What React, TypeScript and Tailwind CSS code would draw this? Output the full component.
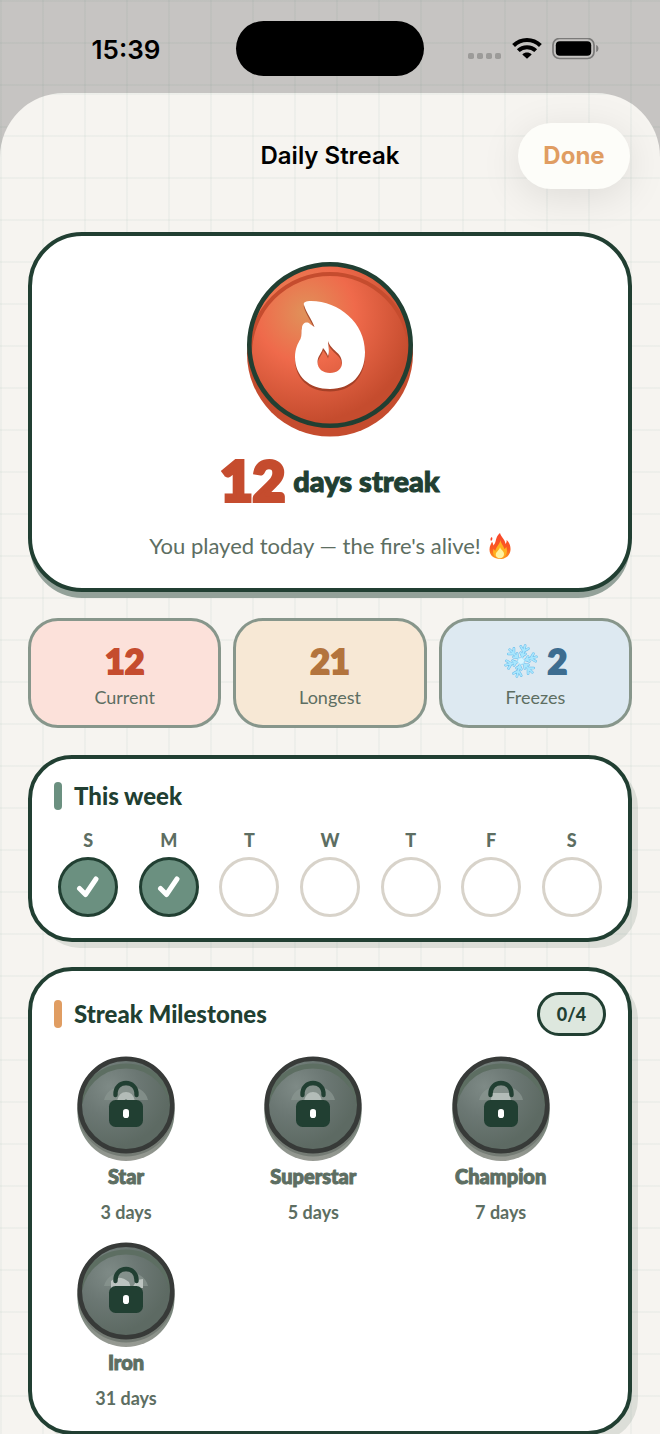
import React from 'react';

const stats = [
  { label: 'Current', value: '12', card: 'bg-[#fce1da]', text: 'text-[#c54c2e]' },
  { label: 'Longest', value: '21', card: 'bg-[#f7e8d5]', text: 'text-[#b3743d]' },
  { label: 'Freezes', value: '2', card: 'bg-[#dde9f1]', text: 'text-[#3d6d90]', frozen: true },
];

const week = [
  { day: 'S', done: true },
  { day: 'M', done: true },
  { day: 'T', done: false },
  { day: 'W', done: false },
  { day: 'T', done: false },
  { day: 'F', done: false },
  { day: 'S', done: false },
];

const milestones = [
  { name: 'Star', days: 3 },
  { name: 'Superstar', days: 5 },
  { name: 'Champion', days: 7 },
  { name: 'Iron', days: 31 },
];

const GRID =
  'bg-[linear-gradient(to_right,rgba(40,110,80,0.04)_2px,transparent_2px),linear-gradient(to_bottom,rgba(40,110,80,0.04)_2px,transparent_2px)] bg-[size:42px_42px]';

const DISPLAY = "font-['Lato',sans-serif] font-black";

const StatusBar: React.FC = () => (
  <div className={`relative flex h-[157px] items-start justify-between bg-[#c6c4c2] px-[60px] pt-[21px] ${GRID}`}>
    <div className="flex h-14 w-[132px] items-center justify-center text-[26px] font-semibold text-black">15:39</div>
    <div className="h-[55px] w-[188px] rounded-full bg-black" />
    <div className="flex h-14 w-[132px] items-center gap-[10px]">
      <svg viewBox="0 0 34 8" className="mt-[15px] h-2 w-[34px] shrink-0" fill="#9c9b99">
        <rect x="0" y="0" width="6" height="6" rx="1.8" />
        <rect x="9" y="0" width="6" height="6" rx="1.8" />
        <rect x="18" y="0" width="6" height="6" rx="1.8" />
        <rect x="27" y="0" width="6" height="6" rx="1.8" />
      </svg>
      <svg viewBox="0 0 30 22" className="h-[22px] w-[30px] shrink-0" fill="none" stroke="#000" strokeWidth="4">
        <path d="M1.6 7.500 C9 0.2 21 0.2 28.4 7.500" />
        <path d="M6.3 12.600 C11 8 19 8 23.7 12.600" />
        <path d="M15 20.800 L10.300 16.400 C13 14 17 14 19.700 16.400 Z" fill="#000" stroke="none" />
      </svg>
      <svg viewBox="0 0 48 22" className="h-[22px] w-12 shrink-0">
        <rect x="1" y="0.500" width="41" height="20" rx="6.5" fill="none" stroke="#7b7a79" strokeWidth="1.7" />
        <rect x="3.8" y="3.300" width="35.4" height="14.4" rx="4" fill="#000" />
        <path d="M44.2 7 C47.2 8 47.2 13 44.2 14 Z" fill="#7b7a79" />
      </svg>
    </div>
  </div>
);

const FireCoin: React.FC = () => (
  <svg viewBox="0 0 168 176" className="h-44 w-[168px]">
    <defs>
      <radialGradient id="ember" cx="0.35" cy="0.3" r="0.68">
        <stop offset="0" stopColor="#e0925a" />
        <stop offset="0.45" stopColor="#ef6a4b" />
        <stop offset="1" stopColor="#c54c2e" />
      </radialGradient>
      <clipPath id="emberFace">
        <circle cx="84" cy="84" r="79" />
      </clipPath>
    </defs>
    <circle cx="84" cy="92.5" r="83" fill="#c54c2e" />
    <circle cx="84" cy="84" r="80.5" fill="url(#ember)" />
    <circle cx="84" cy="93" r="80" fill="none" stroke="#c54c2e" strokeWidth="4" clipPath="url(#emberFace)" />
    <circle cx="84" cy="84" r="80.7" fill="none" stroke="#213f32" strokeWidth="4.6" />
    <g transform="translate(0 1)">
      <path
        d="M58 43 C57 40 60 39 65 39 C93 39 119 61 119 90 C119 113 105 127 84 127 C63 127 49 114 49 95 C49 87 52 81 54.500 77 C56 73 55 70 56 66 C56 61 61 59 64 62 L68.500 65 C66 58 60 50 58 43 Z M82 79 C85 89 96 90 96 101 C96 107 91 111 84 111 C77 111 71.500 107 71.500 100 C71.500 94 76 91 77 86 C79 88 81 91 82 94 C84 89 82 84 82 79 Z"
        fill="#943820"
        fillRule="evenodd"
        transform="translate(0 2.5)"
        opacity="0.75"
      />
      <path
        d="M58 43 C57 40 60 39 65 39 C93 39 119 61 119 90 C119 113 105 127 84 127 C63 127 49 114 49 95 C49 87 52 81 54.500 77 C56 73 55 70 56 66 C56 61 61 59 64 62 L68.500 65 C66 58 60 50 58 43 Z M82 79 C85 89 96 90 96 101 C96 107 91 111 84 111 C77 111 71.500 107 71.500 100 C71.500 94 76 91 77 86 C79 88 81 91 82 94 C84 89 82 84 82 79 Z"
        fill="#fff"
        fillRule="evenodd"
      />
    </g>
  </svg>
);

const FireEmoji: React.FC = () => (
  <svg viewBox="0 0 22 26" className="h-[26px] w-[22px]" aria-hidden="true">
    <defs>
      <linearGradient id="fireOuter" x1="0" y1="0" x2="0" y2="1">
        <stop offset="0" stopColor="#f8452c" />
        <stop offset="0.6" stopColor="#fb5a22" />
        <stop offset="1" stopColor="#ff9a1e" />
      </linearGradient>
    </defs>
    <path
      d="M11 0 C12 4 16 6 16.500 11 C17.500 10 17.800 8.500 17.600 7 C20 9 21.800 12.500 21.500 17 C21 22.500 16.500 26 11 26 C5 26 0.500 22.500 0.500 16.500 C0.500 13 2.300 10.500 3 8.800 C4 10 4.200 11.500 4.300 12.500 C7 9.500 6.500 7.500 7.500 5 C8.200 3 9.500 1 11 0 Z"
      fill="url(#fireOuter)"
    />
    <path d="M2 8 C1 6.500 1.400 5 2.800 4 C4 5.500 3.200 7 2 8 Z" fill="#f8452c" />
    <path d="M11.500 7 C12 11 15 13 15.300 16 C16.500 15.500 17 14.500 17.200 13.800 C19 18 18 25 11 25 C4.500 25 3 20 4.600 15.800 C5 17 5.500 17.500 6.500 17.800 C6.800 14 10.500 12 11.500 7 Z" fill="#ffb01f" />
    <path d="M11 14 C11.500 17 15.500 18 15 21.500 C14.700 24 13 25.300 11 25.300 C8.500 25.300 6.500 23.700 6.800 21.300 C7 18.500 10.500 17.500 11 14 Z" fill="#fff2a0" />
  </svg>
);

const SnowflakeEmoji: React.FC = () => (
  <svg viewBox="-18 -18 36 36" className="size-9" fill="none" strokeLinecap="round" aria-hidden="true">
    {[15, 75, 135, 195, 255, 315].map((angle) => (
      <g key={angle} transform={`rotate(${angle})`}>
        <path d="M0 0 V-16 M0 -5 L-2.500 -8 M0 -5 L2.500 -8 M0 -10 L-4 -14 M0 -10 L4 -14" stroke="#62b9ea" strokeWidth="2.6" />
        <path d="M0 0 V-16 M0 -5 L-2.500 -8 M0 -5 L2.500 -8 M0 -10 L-4 -14 M0 -10 L4 -14" stroke="#a9e6fd" strokeWidth="1.7" />
      </g>
    ))}
    <circle r="3" fill="#d6f5ff" />
  </svg>
);

const LockedCoin: React.FC<{ name: string }> = ({ name }) => (
  <svg viewBox="0 0 98 106" className="h-[106px] w-[98px]">
    <defs>
      <radialGradient id={`stone-${name}`} cx="0.32" cy="0.3" r="0.66">
        <stop offset="0" stopColor="#7e8a86" />
        <stop offset="0.5" stopColor="#6b7773" />
        <stop offset="1" stopColor="#5d6a63" />
      </radialGradient>
      <linearGradient id={`rim-${name}`} x1="0" y1="0" x2="0" y2="1">
        <stop offset="0.5" stopColor="#6d7d72" />
        <stop offset="1" stopColor="#989b94" />
      </linearGradient>
      <clipPath id={`face-${name}`}>
        <circle cx="49" cy="49" r="45" />
      </clipPath>
    </defs>
    <circle cx="49" cy="56.500" r="48.500" fill={`url(#rim-${name})`} />
    <circle cx="49" cy="52" r="48.500" fill="#747b74" />
    <circle cx="49" cy="49" r="46" fill={`url(#stone-${name})`} />
    <circle cx="49" cy="57" r="47" fill="none" stroke="#5d6e62" strokeWidth="5" clipPath={`url(#face-${name})`} />
    <circle cx="49" cy="49" r="46.300" fill="none" stroke="#373a38" strokeWidth="4.600" />
    <path d="M27 44 C31 25 67 25 71 44 Z" fill="#8a9590" opacity="0.75" />
    {name === 'Iron' ? (
      <path d="M34 46 V39 Q42 32 52 40 L54 46 Z M55 46 L60 38 L66 37 V46 Z" fill="#bcc4c0" />
    ) : name === 'Champion' ? (
      <path d="M40 37 H57 L59 44 H39 Z" fill="#b3bcb8" />
    ) : (
      <path d="M40 45 Q42 36 49 36 Q56 36 58 45 Z" fill="#b3bcb8" />
    )}
    <path d="M38.500 39 C37.500 23 60.500 23 59.500 39" fill="none" stroke="#213f32" strokeWidth="4.400" strokeLinecap="round" />
    {name === 'Star' && <path d="M46.500 45 Q49 42 51.500 45 Z" fill="#213f32" />}
    <rect x="32" y="44" width="34" height="27" rx="6.500" fill="#213f32" />
    <rect x="46" y="53" width="6" height="9" rx="2.800" fill="#fff" />
  </svg>
);

const SectionTitle: React.FC<{ bar: string; children: React.ReactNode }> = ({ bar, children }) => (
  <h2 className={`flex items-center gap-3 text-2xl leading-7 text-[#213f32] ${DISPLAY}`}>
    <span className={`h-7 w-2 rounded-full ${bar}`} />
    {children}
  </h2>
);

const App: React.FC = () => (
  <div className="min-h-screen overflow-hidden bg-[#c6c4c2] font-['Inter',sans-serif]">
    <StatusBar />
    <main className={`relative -mt-16 rounded-t-[64px] bg-[#f6f4f0] px-7 ${GRID}`}>
      <header className="grid grid-cols-3 items-center pt-[30px]">
        <h1 className="col-start-2 text-center text-2xl font-semibold whitespace-nowrap text-black">Daily Streak</h1>
        <button
          type="button"
          className="mr-[2px] h-[66px] w-28 justify-self-end rounded-full bg-[#fdfdf9] text-2xl font-bold text-[#e09d62] shadow-[0_8px_40px_rgba(0,0,0,0.1)]"
        >
          Done
        </button>
      </header>

      <section className="mt-[43px] flex flex-col items-center rounded-[54px] border-4 border-[#213f32] bg-white pt-[25px] pb-7 shadow-[0_8px_0_-2px_#93a199]">
        <FireCoin />
        <div className="mt-2 flex h-[70px] items-center gap-2">
          <span className={`text-[56px] leading-none text-[#c54c2e] [-webkit-text-stroke:4px_currentColor] [stroke-linejoin:round] ${DISPLAY}`}>
            12
          </span>
          <span className={`text-[29px] leading-none text-[#213f32] [-webkit-text-stroke:1px_currentColor] ${DISPLAY}`}>days streak</span>
        </div>
        <p className="mt-4 flex h-[29px] items-center gap-2 font-['Lato',sans-serif] text-[22px] text-[#5d6e62]">
          You played today — the fire's alive!
          <FireEmoji />
        </p>
      </section>

      <section className="mt-[26px] grid grid-cols-3 gap-3">
        {stats.map(({ label, value, card, text, frozen }) => (
          <div key={label} className={`flex h-[110px] flex-col items-center rounded-[30px] border-[3px] border-[#87968b] pt-5 ${card}`}>
            <div className={`flex h-10 items-center gap-2 text-[34px] leading-none [-webkit-text-stroke:2px_currentColor] ${text} ${DISPLAY}`}>
              {frozen && <SnowflakeEmoji />}
              {value}
            </div>
            <div className="font-['Lato',sans-serif] text-lg leading-8 text-[#5d6e62]">{label}</div>
          </div>
        ))}
      </section>

      <section className="mt-[27px] rounded-[44px] border-4 border-[#213f32] bg-white px-[22px] pt-[23px] pb-[21px] shadow-[8px_8px_0_-2px_rgba(33,63,50,0.12)]">
        <SectionTitle bar="bg-[#6b9080]">This week</SectionTitle>
        <ul className="mt-[18px] grid grid-cols-7 gap-3">
          {week.map(({ day, done }, i) => (
            <li key={i} className="flex flex-col items-center gap-[5px]">
              <span className="font-['Lato',sans-serif] text-lg leading-6 font-black text-[#5d6e62]">{day}</span>
              <span
                className={`flex size-[60px] items-center justify-center rounded-full border-[3px] ${
                  done ? 'border-[#213f32] bg-[#6b9080]' : 'border-[#d8d3ca] bg-white'
                }`}
              >
                {done && (
                  <svg viewBox="0 0 24 24" className="size-6" fill="none" stroke="#fff" strokeWidth="5" strokeLinecap="round" strokeLinejoin="round">
                    <path d="M3.500 13.500 L9.500 19.500 L20 4" />
                  </svg>
                )}
              </span>
            </li>
          ))}
        </ul>
      </section>

      <section className="mt-[25px] rounded-[44px] border-4 border-[#213f32] bg-white px-[22px] pt-[21px] pb-[19px] shadow-[8px_8px_0_-2px_rgba(33,63,50,0.12)]">
        <div className="flex items-center justify-between">
          <SectionTitle bar="bg-[#e09d62]">Streak Milestones</SectionTitle>
          <span className="flex h-11 w-[69px] items-center justify-center rounded-full border-[3px] border-[#213f32] bg-[#dde7de] font-['Lato',sans-serif] text-lg font-black text-[#213f32]">
            0/4
          </span>
        </div>
        <ul className="mt-5 grid grid-cols-3 gap-x-[10px] gap-y-4">
          {milestones.map(({ name, days }) => (
            <li key={name} className="flex w-36 flex-col items-center">
              <LockedCoin name={name} />
              <span className={`text-xl leading-7 text-[#5d6e62] [-webkit-text-stroke:1px_currentColor] ${DISPLAY}`}>{name}</span>
              <span className="mt-2 font-['Lato',sans-serif] text-lg leading-7 font-bold text-[#5d6e62]">{days} days</span>
            </li>
          ))}
        </ul>
      </section>
    </main>
  </div>
);

export default App;
